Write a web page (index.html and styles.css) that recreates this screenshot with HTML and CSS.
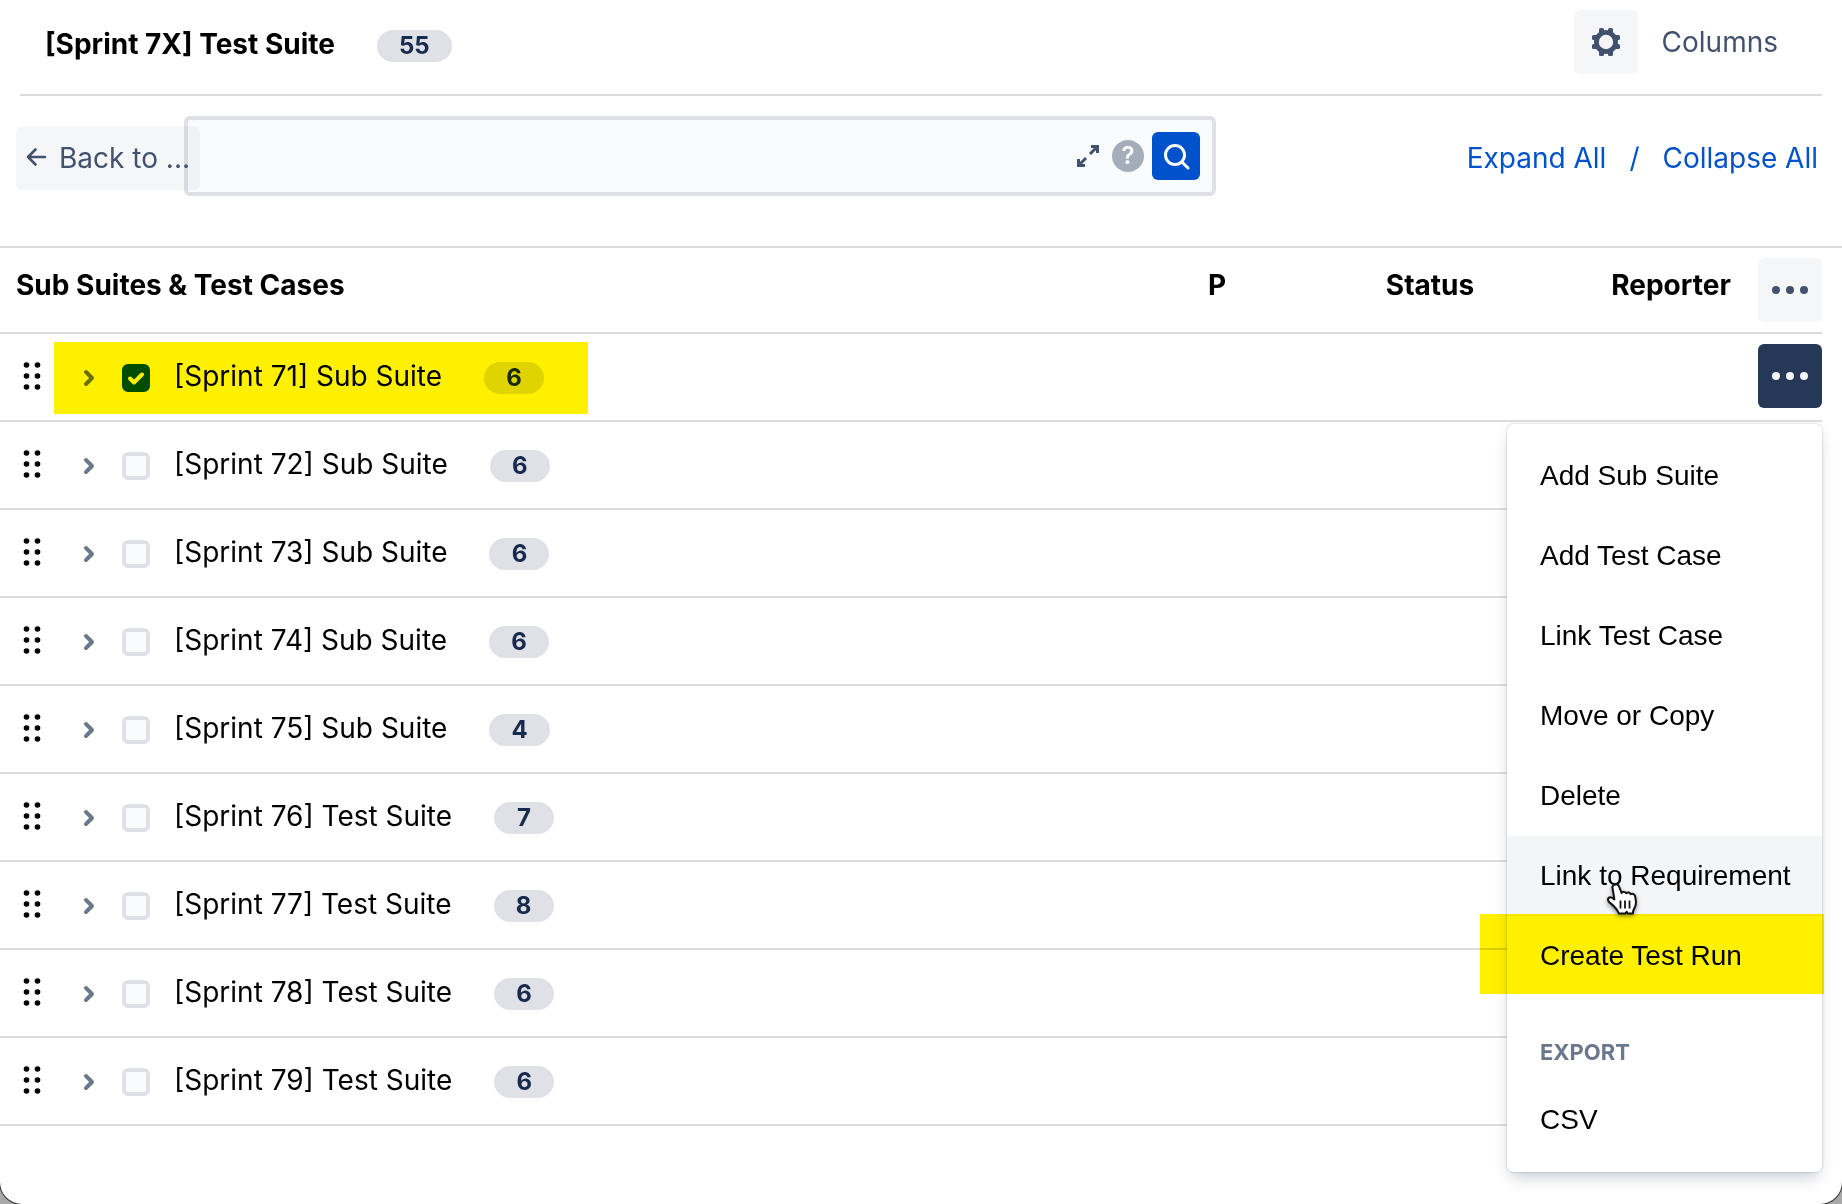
FILE: index.html
```html
<!DOCTYPE html>
<html lang="en">
<head>
<meta charset="utf-8">
<title>[Sprint 7X] Test Suite</title>
<link rel="stylesheet" href="styles.css">
</head>
<body>
<svg width="0" height="0" class="sprite" aria-hidden="true">
  <symbol id="grip" viewBox="0 0 18 30"><g fill="#000"><circle cx="3.5" cy="4" r="2.8"/><circle cx="14.5" cy="4" r="2.8"/><circle cx="3.5" cy="15" r="2.8"/><circle cx="14.5" cy="15" r="2.8"/><circle cx="3.5" cy="26" r="2.8"/><circle cx="14.5" cy="26" r="2.8"/></g></symbol>
  <symbol id="chevron" viewBox="0 0 16 20"><path d="M5 4l6 6-6 6" fill="none" stroke="#6b778c" stroke-width="4" stroke-linecap="round" stroke-linejoin="round"/></symbol>
  <symbol id="dots" viewBox="0 0 40 12"><circle cx="6" cy="6" r="4" fill="currentColor"/><circle cx="20" cy="6" r="4" fill="currentColor"/><circle cx="34" cy="6" r="4" fill="currentColor"/></symbol>
</svg>
<main class="window">
  <header class="header">
    <div class="heading">
      <h1 class="title">[Sprint 7X] Test Suite</h1>
      <span class="badge">55</span>
    </div>
    <div class="columns">
      <button class="square" type="button" id="columns" aria-label="Columns settings">
        <svg width="32" height="32" viewBox="0 0 32 32"><g fill="#42526e"><rect x="9" y="2" width="5" height="28" rx="1.5"/><rect x="18" y="2" width="5" height="28" rx="1.5"/><rect x="2" y="9" width="28" height="5" rx="1.5"/><rect x="2" y="18" width="28" height="5" rx="1.5"/><circle cx="16" cy="16" r="12"/></g><circle cx="16" cy="16" r="7.2" fill="#f5f5f7"/></svg>
      </button>
      <label for="columns">Columns</label>
    </div>
  </header>

  <div class="toolbar">
    <button class="back" type="button">
      <svg width="24" height="24" viewBox="0 0 24 24"><path d="M20 11H3M10.500 3.500L3 11l7.500 7.500" fill="none" stroke="#42526e" stroke-width="2.600" stroke-linecap="round" stroke-linejoin="round"/></svg>
      <span>Back to ...</span>
    </button>
    <form class="search">
      <input class="query" type="text" aria-label="Search">
      <button class="plain" type="button" aria-label="Expand editor">
        <svg width="24" height="24" viewBox="0 0 24 24"><path d="M14 10l7-7M15 2.500h6.500V9M10 14l-7 7M2.500 15v6.500H9" fill="none" stroke="#42526e" stroke-width="3"/></svg>
      </button>
      <button class="help" type="button" aria-label="Help">?</button>
      <button class="submit" type="submit" aria-label="Search">
        <svg width="32" height="32" viewBox="0 0 32 32"><circle cx="15" cy="15" r="9.500" fill="none" stroke="#fff" stroke-width="3"/><path d="M22 22l6 6" stroke="#fff" stroke-width="3" stroke-linecap="round"/></svg>
      </button>
    </form>
    <nav class="links">
      <a href="#expand">Expand All</a>
      <span class="slash">/</span>
      <a href="#collapse">Collapse All</a>
    </nav>
  </div>

  <div class="suites">
    <table class="table">
      <colgroup><col><col class="col-p"><col class="col-status"><col class="col-reporter"><col class="col-actions"></colgroup>
      <thead>
        <tr>
          <th class="name" scope="col">Sub Suites &amp; Test Cases</th>
          <th scope="col">P</th>
          <th scope="col">Status</th>
          <th scope="col">Reporter</th>
          <td class="actions"><button class="square" type="button" aria-label="More actions"><svg width="40" height="12"><use href="#dots"/></svg></button></td>
        </tr>
      </thead>
      <tbody>
        <tr>
          <td><div class="suite">
            <svg width="18" height="30" class="grip"><use href="#grip"/></svg>
            <button class="plain toggle" type="button" aria-label="Expand"><svg width="16" height="20"><use href="#chevron"/></svg></button>
            <span class="tick"><input type="checkbox" id="s71" checked><svg width="28" height="28" viewBox="0 0 28 28"><path d="M8 14.500l4 4 8-8" fill="none" stroke="#fff" stroke-width="4" stroke-linecap="round" stroke-linejoin="round"/></svg></span>
            <label for="s71">[Sprint 71] Sub Suite</label><span class="badge">6</span>
            <span class="marker marker-row"></span>
          </div></td>
          <td></td><td></td><td></td>
          <td class="actions">
            <div class="dropdown">
              <button class="square open" type="button" aria-label="More actions" aria-expanded="true"><svg width="40" height="12"><use href="#dots"/></svg></button>
              <div class="menu">
                <button class="item" type="button">Add Sub Suite</button>
                <button class="item" type="button">Add Test Case</button>
                <button class="item" type="button">Link Test Case</button>
                <button class="item" type="button">Move or Copy</button>
                <button class="item" type="button">Delete</button>
                <button class="item hovered" type="button">Link to Requirement</button>
                <button class="item" type="button">Create Test Run<span class="marker marker-item"></span></button>
                <h2 class="group">EXPORT</h2>
                <button class="item" type="button">CSV</button>
                <svg class="cursor" width="34" height="36" viewBox="0 0 34 36"><path d="M9 2.500c1.800-.7 3.500.3 4.200 2.300l2.400 6.200c1-1.600 3.800-1.500 4.600.3 1.300-1.300 3.700-.9 4.400.8 1.600-1 4 0 4.400 2 .8 3 1.300 6 .7 8.700-.5 2.400-2 4.200-2.600 6.500l-.2 2.200h-5.200l-1-1.700-1.400 1.700h-6.500c-1.500-4.500-5-7.600-8.700-10.600-1.500-1.300-2.800-3.200-1.700-4.800 1.600-1.700 4.300-.3 6 1.300L6.500 6c-.6-1.600.8-3 2.500-3.500z" fill="#fff" stroke="#111" stroke-width="2" stroke-linejoin="round"/><path d="M14.500 18.500v8M19 18.500v8M23.500 18.500v8" stroke="#111" stroke-width="1.800"/></svg>
              </div>
            </div>
          </td>
        </tr>
        <tr><td><div class="suite"><svg width="18" height="30" class="grip"><use href="#grip"/></svg><button class="plain toggle" type="button" aria-label="Expand"><svg width="16" height="20"><use href="#chevron"/></svg></button><span class="tick"><input type="checkbox" id="s72"></span><label for="s72">[Sprint 72] Sub Suite</label><span class="badge">6</span></div></td><td></td><td></td><td></td><td></td></tr>
        <tr><td><div class="suite"><svg width="18" height="30" class="grip"><use href="#grip"/></svg><button class="plain toggle" type="button" aria-label="Expand"><svg width="16" height="20"><use href="#chevron"/></svg></button><span class="tick"><input type="checkbox" id="s73"></span><label for="s73">[Sprint 73] Sub Suite</label><span class="badge">6</span></div></td><td></td><td></td><td></td><td></td></tr>
        <tr><td><div class="suite"><svg width="18" height="30" class="grip"><use href="#grip"/></svg><button class="plain toggle" type="button" aria-label="Expand"><svg width="16" height="20"><use href="#chevron"/></svg></button><span class="tick"><input type="checkbox" id="s74"></span><label for="s74">[Sprint 74] Sub Suite</label><span class="badge">6</span></div></td><td></td><td></td><td></td><td></td></tr>
        <tr><td><div class="suite"><svg width="18" height="30" class="grip"><use href="#grip"/></svg><button class="plain toggle" type="button" aria-label="Expand"><svg width="16" height="20"><use href="#chevron"/></svg></button><span class="tick"><input type="checkbox" id="s75"></span><label for="s75">[Sprint 75] Sub Suite</label><span class="badge">4</span></div></td><td></td><td></td><td></td><td></td></tr>
        <tr><td><div class="suite"><svg width="18" height="30" class="grip"><use href="#grip"/></svg><button class="plain toggle" type="button" aria-label="Expand"><svg width="16" height="20"><use href="#chevron"/></svg></button><span class="tick"><input type="checkbox" id="s76"></span><label for="s76">[Sprint 76] Test Suite</label><span class="badge">7</span></div></td><td></td><td></td><td></td><td></td></tr>
        <tr><td><div class="suite"><svg width="18" height="30" class="grip"><use href="#grip"/></svg><button class="plain toggle" type="button" aria-label="Expand"><svg width="16" height="20"><use href="#chevron"/></svg></button><span class="tick"><input type="checkbox" id="s77"></span><label for="s77">[Sprint 77] Test Suite</label><span class="badge">8</span></div></td><td></td><td></td><td></td><td></td></tr>
        <tr><td><div class="suite"><svg width="18" height="30" class="grip"><use href="#grip"/></svg><button class="plain toggle" type="button" aria-label="Expand"><svg width="16" height="20"><use href="#chevron"/></svg></button><span class="tick"><input type="checkbox" id="s78"></span><label for="s78">[Sprint 78] Test Suite</label><span class="badge">6</span></div></td><td></td><td></td><td></td><td></td></tr>
        <tr><td><div class="suite"><svg width="18" height="30" class="grip"><use href="#grip"/></svg><button class="plain toggle" type="button" aria-label="Expand"><svg width="16" height="20"><use href="#chevron"/></svg></button><span class="tick"><input type="checkbox" id="s79"></span><label for="s79">[Sprint 79] Test Suite</label><span class="badge">6</span></div></td><td></td><td></td><td></td><td></td></tr>
      </tbody>
    </table>
  </div>
</main>
</body>
</html>
```
FILE: styles.css
```css
* {
  box-sizing: border-box;
}

body {
  margin: 0;
  background: #a8a8a8;
  color: #000;
  font: 400 28px/32px Inter, "Liberation Sans", sans-serif;
}

button,
input {
  margin: 0;
  padding: 0;
  border: 0;
  background: none;
  color: inherit;
  font: inherit;
}

svg {
  display: block;
}

.sprite {
  position: absolute;
}

.window {
  min-height: 100vh;
  background: #fff;
  border-radius: 0 0 22px 22px;
  box-shadow: 0 0 0 1px #333;
}

.header {
  display: flex;
  justify-content: space-between;
  margin: 0 20px;
  padding: 10px 44px 20px 25px;
  border-bottom: 2px solid #dcdcde;
}

.heading {
  display: flex;
  align-items: center;
  padding-top: 4px;
}

.title {
  margin: 0;
  font-size: 28px;
  font-weight: 700;
}

.badge {
  min-width: 60px;
  margin: 4px 0 0 42px;
  padding: 0 22px;
  border-radius: 16px;
  background: #dfe1e6;
  color: #172b4d;
  font-size: 24px;
  font-weight: 700;
  text-align: center;
}

.columns {
  display: flex;
  align-items: center;
  gap: 24px;
  color: #42526e;
}

.square {
  display: flex;
  align-items: center;
  justify-content: center;
  width: 64px;
  height: 64px;
  border-radius: 6px;
  background: rgba(9, 30, 66, 0.04);
  color: #42526e;
}

.square.open {
  background: #253858;
  color: #f4f5f7;
}

.toolbar {
  display: flex;
  align-items: center;
  min-height: 150px;
  padding: 20px 24px 46px 16px;
}

.back {
  position: relative;
  z-index: 1;
  display: flex;
  flex: none;
  align-items: center;
  gap: 10px;
  width: 184px;
  height: 64px;
  padding-left: 9px;
  border-radius: 6px;
  background: rgba(9, 30, 66, 0.04);
  color: #42526e;
  white-space: nowrap;
}

.search {
  display: flex;
  flex: 0 1 1032px;
  align-self: flex-start;
  align-items: center;
  gap: 8px;
  height: 80px;
  margin-left: -16px;
  padding: 0 12px;
  border: 4px solid #dfe1e6;
  border-radius: 6px;
  background: #fafbfc;
}

.query {
  flex: 1;
  min-width: 0;
  height: 72px;
  outline: 0;
}

.plain {
  flex: none;
  margin-right: 4px;
}

.help {
  width: 32px;
  height: 32px;
  border-radius: 50%;
  background: #a5adba;
  color: #fff;
  font-size: 24px;
  font-weight: 600;
}

.submit {
  display: flex;
  align-items: center;
  justify-content: center;
  width: 48px;
  height: 48px;
  border-radius: 6px;
  background: #0052cc;
}

.links {
  display: flex;
  gap: 23px;
  margin-left: auto;
  color: #0052cc;
  white-space: nowrap;
}

.links a {
  color: inherit;
  text-decoration: none;
}

.suites {
  padding-right: 20px;
  border-top: 2px solid #dcdcde;
}

.table {
  width: 100%;
  border-spacing: 0;
  table-layout: fixed;
}

.col-p {
  width: 118px;
}

.col-status {
  width: 308px;
}

.col-reporter {
  width: 174px;
}

.col-actions {
  width: 64px;
}

.table th,
.table td {
  padding: 10px 0 12px;
  border-bottom: 2px solid #dcdcde;
  vertical-align: top;
}

.table th {
  padding-top: 21px;
  font-weight: 700;
}

.table .name {
  padding-left: 16px;
  text-align: left;
}

.table thead td {
  padding-bottom: 10px;
}

.suite {
  position: relative;
  display: grid;
  grid-template-columns: 54px 68px 52px auto auto;
  align-items: center;
  justify-content: start;
  height: 64px;
}

.grip {
  margin-left: 23px;
}

.toggle {
  justify-self: start;
  margin: 4px 0 0 27px;
}

.tick {
  display: grid;
  width: 28px;
  margin-top: 4px;
}

.tick input {
  grid-area: 1 / 1;
  width: 28px;
  height: 28px;
  border: 4px solid #dfe1e6;
  border-radius: 6px;
  background: #fafbfc;
  appearance: none;
}

.tick input:checked {
  border-color: #0052cc;
  background: #0052cc;
}

.tick svg {
  grid-area: 1 / 1;
  pointer-events: none;
}

.marker {
  position: absolute;
  background: #fff000;
  mix-blend-mode: multiply;
  pointer-events: none;
}

.marker-row {
  top: -2px;
  left: 54px;
  width: 534px;
  height: 72px;
}

.marker-item {
  top: -2px;
  right: -2px;
  left: -27px;
  height: 80px;
}

.dropdown {
  position: relative;
}

.menu {
  position: absolute;
  top: 80px;
  right: 0;
  width: 315px;
  padding: 12px 0;
  border-radius: 6px;
  background: #fff;
  box-shadow: 0 8px 16px -4px rgba(9, 30, 66, 0.25), 0 0 2px rgba(9, 30, 66, 0.31);
  font-family: "Liberation Sans", Arial, sans-serif;
  font-size: 28px;
}

.item {
  position: relative;
  display: block;
  width: 100%;
  height: 80px;
  padding-left: 33px;
  text-align: left;
  white-space: nowrap;
}

.item.hovered {
  background: #f4f5f7;
}

.group {
  margin: 0;
  padding: 40px 0 12px 33px;
  color: #6b778c;
  font: 700 22px/32px Inter, "Liberation Sans", sans-serif;
}

.cursor {
  position: absolute;
  top: 458px;
  left: 99px;
  filter: drop-shadow(0 2px 2px rgba(0, 0, 0, 0.4));
}
```
